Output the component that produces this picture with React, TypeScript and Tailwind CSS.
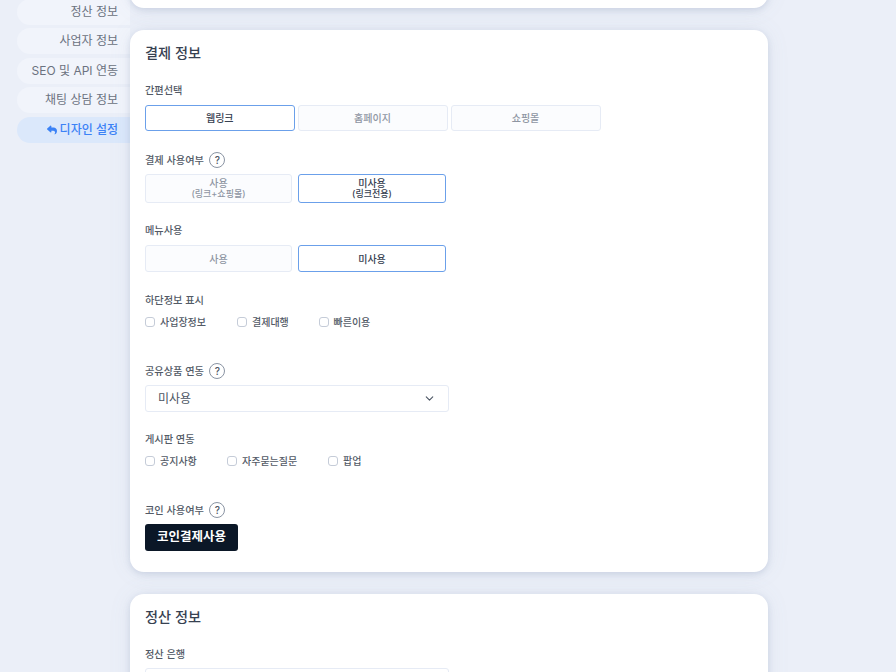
import { ChevronDown } from "lucide-react";
import type { ReactNode } from "react";

const font = { fontFamily: '"Inter", "Noto Sans CJK KR", sans-serif' };

function Help() {
  return (
    <span className="ml-[5.5px] flex h-4 w-4 items-center justify-center rounded-full border border-[#8a94a3] text-[10px] leading-none text-[#4b5563]">?</span>
  );
}

function Label({ children, help }: { children: string; help?: boolean }) {
  return (
    <div className="flex h-4 items-center text-[10.2px] font-medium leading-4 text-[#525a66]">
      <span>{children}</span>
      {help && <Help />}
    </div>
  );
}

function Btn({ children, sub, on, w, h }: { children: string; sub?: string; on?: boolean; w: string; h: string }) {
  return (
    <div
      className={`flex flex-col items-center justify-center rounded-[3px] border-[1.5px] text-[10px] font-medium ${w} ${h} ${
        on ? "border-[#6ba0ea] bg-white text-[#374151]" : "border-[#e6ebf5] bg-[#fbfcfe] text-[#8f96a3]"
      }`}
    >
      <span className={sub ? "leading-[11px]" : "leading-none"}>{children}</span>
      {sub && <span className="text-[9px] leading-[10px]">{sub}</span>}
    </div>
  );
}

function Check({ children, w }: { children: string; w: string }) {
  return (
    <div className={`flex h-4 items-center text-[10px] font-medium text-[#525a66] ${w}`}>
      <span className="mr-[5px] h-[10px] w-[10px] rounded-[3px] border border-[#c5ccd8] bg-white" />
      <span>{children}</span>
    </div>
  );
}

function SideItem({ children, on }: { children: ReactNode; on?: boolean }) {
  return (
    <div
      className={`flex h-[26px] shrink-0 items-center justify-end rounded-l-[13px] pr-3 text-[12px] ${
        on ? "bg-[#dbe8fb] font-medium text-[#3b82f6]" : "bg-[#f1f4fb] text-[#6b7280]"
      }`}
    >
      {children}
    </div>
  );
}

function Select({ text }: { text: string }) {
  return (
    <div className="flex h-[27px] w-[304px] items-center justify-between rounded-[3px] border border-[#e6ebf5] bg-white pl-3 pr-[12px] text-[12px] text-[#4b5563]">
      <span>{text}</span>
      <ChevronDown size={13} strokeWidth={2} className="text-[#4b5563]" />
    </div>
  );
}

const card = "shrink-0 rounded-[14px] bg-white px-[15px] pt-[13px] shadow-[0_2px_6px_rgba(120,135,170,0.25),0_0_24px_rgba(120,135,170,0.08)]";

export default function App() {
  return (
    <div style={font} className="flex h-[672px] w-[896px] items-start overflow-hidden bg-[#ebeff8]">
      <div className="ml-[17px] mt-[-1px] flex w-[113px] shrink-0 flex-col gap-[3.4px]">
        <SideItem>정산 정보</SideItem>
        <SideItem>사업자 정보</SideItem>
        <SideItem>SEO 및 API 연동</SideItem>
        <SideItem>채팅 상담 정보</SideItem>
        <SideItem on>
          <svg viewBox="0 0 512 512" className="mr-[3px] h-[10px] w-[10px] fill-[#3b82f6]">
            <path d="M205 34.8c11.500 5.100 19 16.600 19 29.200v64h112c97.200 0 176 78.800 176 176 0 113.300-81.500 163.900-100.200 174.100-2.500 1.400-5.300 1.900-8.100 1.900-10.900 0-19.700-8.900-19.700-19.700 0-7.500 4.300-14.400 9.800-19.500 9.400-8.800 22.200-26.400 22.200-56.700 0-53-43-96-96-96h-96v64c0 12.600-7.400 24.100-19 29.200s-25 3-34.400-5.400l-160-144C3.900 225.700 0 217.100 0 208s3.900-17.700 10.600-23.800l160-144c9.400-8.500 22.900-10.600 34.400-5.400z" />
          </svg>
          디자인 설정
        </SideItem>
      </div>

      <div className="relative z-10 mt-[-120px] flex w-[638px] shrink-0 flex-col gap-[22px]">
        <div className={`h-[128px] ${card}`} />

        <div className={`h-[542px] ${card}`}>
          <h2 className="h-5 text-[14.2px] font-medium leading-5 text-[#374151]">결제 정보</h2>

          <div className="mt-[19px]"><Label>간편선택</Label></div>
          <div className="mt-[7px] flex gap-[3px]">
            <Btn on w="w-[149.5px]" h="h-[26px]">웹링크</Btn>
            <Btn w="w-[150px]" h="h-[26px]">홈페이지</Btn>
            <Btn w="w-[150px]" h="h-[26px]">쇼핑몰</Btn>
          </div>

          <div className="mt-[21px]"><Label help>결제 사용여부</Label></div>
          <div className="mt-[6px] flex gap-[6px]">
            <Btn w="w-[147px]" h="h-[29px]" sub="(링크+쇼핑몰)">사용</Btn>
            <Btn on w="w-[148px]" h="h-[29px]" sub="(링크전용)">미사용</Btn>
          </div>

          <div className="mt-[19px]"><Label>메뉴사용</Label></div>
          <div className="mt-[7px] flex gap-[6px]">
            <Btn w="w-[147px]" h="h-[27px]">사용</Btn>
            <Btn on w="w-[148px]" h="h-[27px]">미사용</Btn>
          </div>

          <div className="mt-[20px]"><Label>하단정보 표시</Label></div>
          <div className="mt-[6px] flex">
            <Check w="w-[92px]">사업장정보</Check>
            <Check w="w-[81.5px]">결제대행</Check>
            <Check w="w-[80px]">빠른이용</Check>
          </div>

          <div className="mt-[33px]"><Label help>공유상품 연동</Label></div>
          <div className="mt-[6px]"><Select text="미사용" /></div>

          <div className="mt-[19px]"><Label>게시판 연동</Label></div>
          <div className="mt-[6px] flex">
            <Check w="w-[82px]">공지사항</Check>
            <Check w="w-[101px]">자주묻는질문</Check>
            <Check w="w-[60px]">팝업</Check>
          </div>

          <div className="mt-[33px]"><Label help>코인 사용여부</Label></div>
          <div className="mt-[6px] flex h-[27px] w-[93px] items-center justify-center rounded-[3px] bg-[#0b1727] text-[12.5px] font-bold text-white">코인결제사용</div>
        </div>

        <div className={`h-[200px] ${card}`}>
          <h2 className="h-5 text-[14.2px] font-medium leading-5 text-[#374151]">정산 정보</h2>
          <div className="mt-[19px]"><Label>정산 은행</Label></div>
          <div className="mt-[6px]"><Select text="" /></div>
        </div>
      </div>
    </div>
  );
}
